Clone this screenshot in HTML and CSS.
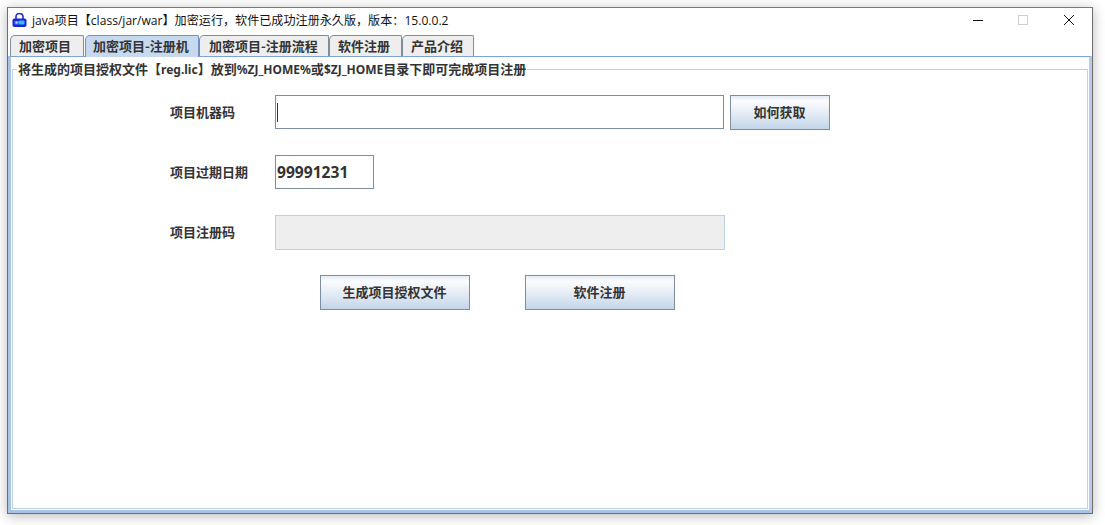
FILE: index.html
```html
<!DOCTYPE html>
<html lang="zh-CN">
<head>
<meta charset="utf-8">
<title>java项目</title>
<link rel="stylesheet" href="styles.css">
</head>
<body>
<div class="window">
  <header class="titlebar">
    <svg class="app-icon" width="15" height="14" viewBox="0 0 15 14" aria-hidden="true">
      <path d="M4 6V3.6a3.5 3.2 0 0 1 7 0V6" fill="none" stroke="#1a2fd0" stroke-width="1.6"/>
      <rect x="0.5" y="5.5" width="14" height="8.5" rx="2" fill="#1c22e0"/>
      <rect x="2.5" y="8" width="4" height="3.5" fill="#3f8cf0"/>
      <rect x="6.5" y="7.5" width="6" height="4" rx="1" fill="#30c4e8"/>
      <circle cx="4.5" cy="9.5" r="1" fill="#b8e4ff"/>
    </svg>
    <span class="title">java项目【class/jar/war】加密运行，软件已成功注册永久版，版本：15.0.0.2</span>
    <div class="controls">
      <svg class="ctl" width="46" height="14" viewBox="0 0 46 14" aria-hidden="true"><path d="M19 6.5h10" stroke="#111" stroke-width="1"/></svg>
      <svg class="ctl" width="46" height="14" viewBox="0 0 46 14" aria-hidden="true"><rect x="18.5" y="1.5" width="9" height="9" fill="none" stroke="#cfcfcf"/></svg>
      <svg class="ctl" width="46" height="14" viewBox="0 0 46 14" aria-hidden="true"><path d="M18 1l10 10M28 1L18 11" stroke="#111" stroke-width="1"/></svg>
    </div>
  </header>
  <nav class="tabs">
    <div class="tab tab-a">加密项目</div>
    <div class="tab tab-b active">加密项目-注册机</div>
    <div class="tab tab-c">加密项目-注册流程</div>
    <div class="tab tab-d">软件注册</div>
    <div class="tab tab-e">产品介绍</div>
  </nav>
  <main class="pane">
    <fieldset class="group">
      <legend class="legend">将生成的项目授权文件【<span class="latin">reg.lic</span>】放到<span class="latin">%ZJ_HOME%</span>或<span class="latin">$ZJ_HOME</span>目录下即可完成项目注册</legend>
      <div class="form">
        <div class="row">
          <label class="label">项目机器码</label>
          <div class="field field-wide"><span class="caret"></span></div>
          <button class="btn btn-small">如何获取</button>
        </div>
        <div class="row">
          <label class="label">项目过期日期</label>
          <div class="field field-date">99991231</div>
        </div>
        <div class="row">
          <label class="label">项目注册码</label>
          <div class="field field-disabled"></div>
        </div>
        <div class="row row-actions">
          <button class="btn btn-large">生成项目授权文件</button>
          <button class="btn btn-large">软件注册</button>
        </div>
      </div>
    </fieldset>
  </main>
</div>
</body>
</html>
```
FILE: styles.css
```css
* { box-sizing: border-box; }
html, body { margin: 0; height: 100%; background: #fff; overflow: hidden; }
body {
  padding: 7px 12px 10px 7px;
  font-family: "Noto Sans CJK SC", "Noto Sans", sans-serif;
  color: #333;
}
.window {
  width: 1086px;
  height: 507px;
  background: #fff;
  border: 1px solid #6f6f6f;
  border-top-color: #7a7a7a;
  box-shadow: 0 2px 12px rgba(0, 0, 0, .28);
  display: flex;
  flex-direction: column;
}
.titlebar {
  height: 27px;
  flex: none;
  display: flex;
  align-items: center;
  padding: 0 0 4px 4px;
}
.app-icon { flex: none; margin-top: 1px; }
.title {
  margin-left: 5px;
  font-size: 12.1px;
  font-family: "Open Sans", "Noto Sans CJK SC", sans-serif;
  color: #111;
  white-space: nowrap;
}
.controls { margin-left: auto; display: flex; padding-top: 2px; }
.ctl { display: block; }
.tabs {
  height: 21px;
  flex: none;
  display: flex;
  padding-left: 2px;
  align-items: flex-end;
  position: relative;
  z-index: 1;
}
.tab {
  height: 21px;
  border: 1px solid #7d8ea0;
  border-bottom: 0;
  border-radius: 5px 2px 0 0;
  background: #eeeeee;
  font-size: 13px;
  font-weight: 700;
  line-height: 19px;
  color: #333;
  white-space: nowrap;
}
.tab-a { width: 74px; margin-right: 1px; padding-left: 8px; }
.tab-b { width: 114px; padding-left: 7px; }
.tab-c { width: 130px; padding-left: 9px; }
.tab-d { width: 73px; padding-left: 8px; }
.tab-e { width: 72px; padding-left: 8px; }
.active {
  background: #c6d9ee;
  border-color: #6f92c2;
  height: 22px;
  margin-bottom: -1px;
}
.pane {
  flex: 1;
  border-top: 1px solid #7fa2d4;
  border-left: 3px solid #a9c3e6;
  border-right: 3px solid #b5cbe8;
  border-bottom: 3px solid #a9c3e6;
  padding: 4px 1px 1px;
  background: #fff;
  min-height: 0;
  display: flex;
}
.group {
  flex: 1;
  margin: 0;
  min-width: 0;
  padding: 0;
  border: 1px solid #bcd1e8;
}
.legend {
  margin-left: 4px;
  padding: 0 1px;
  font-size: 13px;
  font-weight: 700;
  line-height: 16px;
  height: 16px;
  color: #333;
  white-space: nowrap;
}
.latin { font-family: "Noto Sans", sans-serif; font-size: 12px; }
.form {
  padding: 18px 0 0 157px;
  display: flex;
  flex-direction: column;
  gap: 25px;
}
.row { display: flex; align-items: flex-start; height: 35px; }
.label {
  width: 105px;
  flex: none;
  font-size: 13px;
  font-weight: 700;
  line-height: 33px;
  color: #333;
}
.field { height: 34px; border: 1px solid #7d8ea0; background: #fff; }
.field-wide { width: 449px; display: flex; align-items: center; padding-left: 1px; }
.caret { width: 1px; height: 19px; background: #333; }
.field-date {
  width: 99px;
  font: 700 15.6px/32px "Noto Sans", sans-serif;
  padding-left: 1px;
  color: #333;
}
.field-disabled { width: 450px; height: 35px; background: #eeeeee; border-color: #bcd1e8; }
.btn {
  height: 35px;
  padding: 0 1px 2px 0;
  border: 1px solid #7d8ea0;
  background: linear-gradient(#e4ecf5 0%, #fbfcfe 16%, #e6edf6 50%, #c3d5e9 100%);
  font-family: inherit;
  font-size: 13px;
  font-weight: 700;
  color: #333;
}
.btn-small { width: 100px; margin-left: 6px; }
.btn-large { width: 150px; }
.row-actions { padding-left: 150px; gap: 55px; }
```
